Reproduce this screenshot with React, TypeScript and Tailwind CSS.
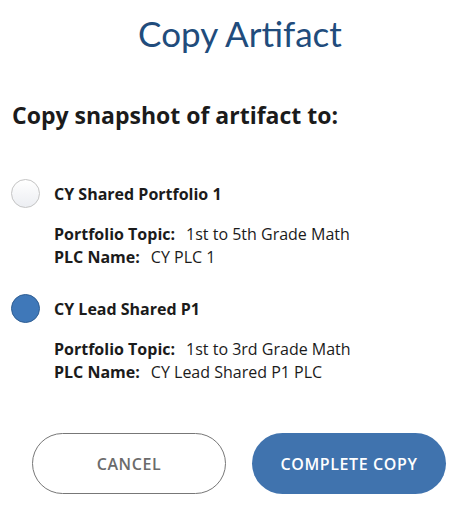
const options = [
  {
    name: "CY Shared Portfolio 1",
    topic: "1st to 5th Grade Math",
    plc: "CY PLC 1",
    selected: false,
  },
  {
    name: "CY Lead Shared P1",
    topic: "1st to 3rd Grade Math",
    plc: "CY Lead Shared P1 PLC",
    selected: true,
  },
];

const Radio = ({ selected }: { selected: boolean }) =>
  selected ? (
    <div className="h-[29px] w-[29px] shrink-0 rounded-full border border-[#2f5e93] bg-[#3f78b9]" />
  ) : (
    <div className="h-[29px] w-[29px] shrink-0 rounded-full border border-[#c4c4c4] bg-gradient-to-b from-white to-[#eceef2]" />
  );

export default function App() {
  return (
    <div className="h-[507px] w-[452px] bg-white font-['Open_Sans',sans-serif] text-[#1b1b1b]">
      <h1 className="pt-[12px] pl-[28px] text-center font-['Lato',sans-serif] text-[35px] leading-[42px] font-normal text-[#214c7c]">
        Copy Artifact
      </h1>

      <h2 className="mt-[47px] pl-[12px] text-[23px] leading-[28px] font-bold">
        Copy snapshot of artifact to:
      </h2>

      <div className="mt-[50px] flex flex-col gap-[25px] pl-[11px]">
        {options.map((o) => (
          <div key={o.name}>
            <div className="flex items-center gap-[14px]">
              <Radio selected={o.selected} />
              <span className="text-[16px] font-bold">{o.name}</span>
            </div>
            <div className="mt-[15px] pl-[43px] text-[16px] leading-[23px]">
              <p>
                <span className="font-bold">Portfolio Topic:</span>
                <span className="ml-[11px]">{o.topic}</span>
              </p>
              <p>
                <span className="font-bold">PLC Name:</span>
                <span className="ml-[11px]">{o.plc}</span>
              </p>
            </div>
          </div>
        ))}
      </div>

      <div className="mt-[49px] flex gap-[26px] pl-[32px]">
        <button className="h-[61px] w-[194px] rounded-full border border-[#777] bg-white text-[16px] font-semibold tracking-[0.6px] text-[#6b6b6b]">
          CANCEL
        </button>
        <button className="h-[61px] w-[194px] rounded-full bg-[#4073ae] text-[16px] font-semibold tracking-[0.6px] text-white">
          COMPLETE COPY
        </button>
      </div>
    </div>
  );
}
